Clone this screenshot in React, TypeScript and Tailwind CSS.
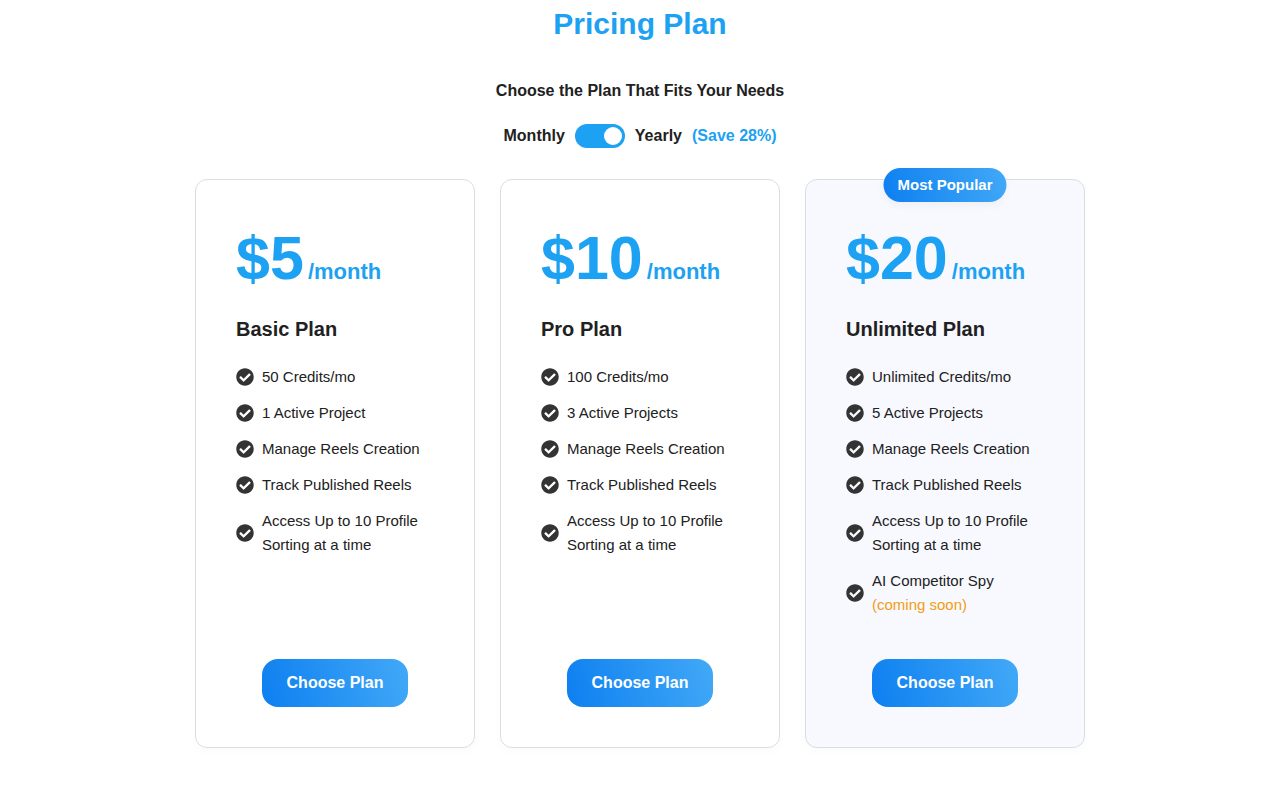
import { useState } from "react";
import { FaCheckCircle } from "react-icons/fa";

type Plan = {
  name: string;
  price: number;
  features: { text: string; note?: string }[];
  popular?: boolean;
};

const plans: Plan[] = [
  {
    name: "Basic Plan",
    price: 5,
    features: [
      { text: "50 Credits/mo" },
      { text: "1 Active Project" },
      { text: "Manage Reels Creation" },
      { text: "Track Published Reels" },
      { text: "Access Up to 10 Profile Sorting at a time" },
    ],
  },
  {
    name: "Pro Plan",
    price: 10,
    features: [
      { text: "100 Credits/mo" },
      { text: "3 Active Projects" },
      { text: "Manage Reels Creation" },
      { text: "Track Published Reels" },
      { text: "Access Up to 10 Profile Sorting at a time" },
    ],
  },
  {
    name: "Unlimited Plan",
    price: 20,
    popular: true,
    features: [
      { text: "Unlimited Credits/mo" },
      { text: "5 Active Projects" },
      { text: "Manage Reels Creation" },
      { text: "Track Published Reels" },
      { text: "Access Up to 10 Profile Sorting at a time" },
      { text: "AI Competitor Spy", note: "(coming soon)" },
    ],
  },
];

function PlanCard({ plan }: { plan: Plan }) {
  return (
    <article
      className={`relative flex flex-col rounded-xl border border-[#dcdde0] p-10 shadow-[0_4px_10px_rgba(0,0,0,0.02)] ${
        plan.popular ? "bg-[#f8f9ff]" : "bg-white"
      }`}
    >
      {plan.popular && (
        <span className="absolute -top-3 left-1/2 -translate-x-1/2 whitespace-nowrap rounded-full bg-[linear-gradient(75deg,#0d7ff0,#42a9f7)] px-3.5 py-[5px] text-[15px] leading-6 font-bold text-white shadow-[0_4px_8px_rgba(0,0,0,0.04)]">
          Most Popular
        </span>
      )}
      <p className="flex items-baseline gap-1 font-bold text-[#1da1f2]">
        <span className="text-[61px] leading-[77px]">${plan.price}</span>
        <span className="text-[22px]">/month</span>
      </p>
      <h3 className="mt-5 text-xl leading-6 font-bold">{plan.name}</h3>
      <ul className="mt-6 mb-[42px] flex flex-col gap-3 text-[15px] leading-6">
        {plan.features.map((feature) => (
          <li key={feature.text} className="flex items-center gap-2">
            <FaCheckCircle className="size-[18px] shrink-0 text-[#333333]" />
            <span>
              {feature.text}
              {feature.note && <span className="block text-[#f39c12]">{feature.note}</span>}
            </span>
          </li>
        ))}
      </ul>
      <button
        type="button"
        className="mt-auto cursor-pointer self-center rounded-2xl bg-[linear-gradient(75deg,#0d7ff0,#42a9f7)] px-[25px] py-3 text-base font-bold text-white"
      >
        Choose Plan
      </button>
    </article>
  );
}

export default function App() {
  const [yearly, setYearly] = useState(true);

  return (
    <main className="min-h-screen bg-white px-4 pt-1.5 pb-12 font-['Liberation_Sans',Arial,sans-serif] text-[#212121]">
      <h1 className="text-center text-3xl leading-9 font-bold text-[#1da1f2]">Pricing Plan</h1>
      <h2 className="mt-[37px] text-center text-base font-bold">Choose the Plan That Fits Your Needs</h2>

      <div className="mt-[21px] flex flex-wrap items-center justify-center gap-2.5 text-base font-bold">
        <span>Monthly</span>
        <label className="flex cursor-pointer">
          <input
            type="checkbox"
            aria-label="Yearly billing"
            className="peer sr-only"
            checked={yearly}
            onChange={(e) => setYearly(e.target.checked)}
          />
          <span className="flex h-6 w-[50px] items-center rounded-full bg-gray-300 px-[3px] peer-checked:justify-end peer-checked:bg-[#1da1f2]">
            <span className="size-[18px] rounded-full bg-white" />
          </span>
        </label>
        <span>Yearly</span>
        <span className="text-[#1da1f2]">(Save 28%)</span>
      </div>

      <section className="mx-auto mt-[31px] grid max-w-[890px] gap-[25px] md:grid-cols-3">
        {plans.map((plan) => (
          <PlanCard key={plan.name} plan={plan} />
        ))}
      </section>
    </main>
  );
}
